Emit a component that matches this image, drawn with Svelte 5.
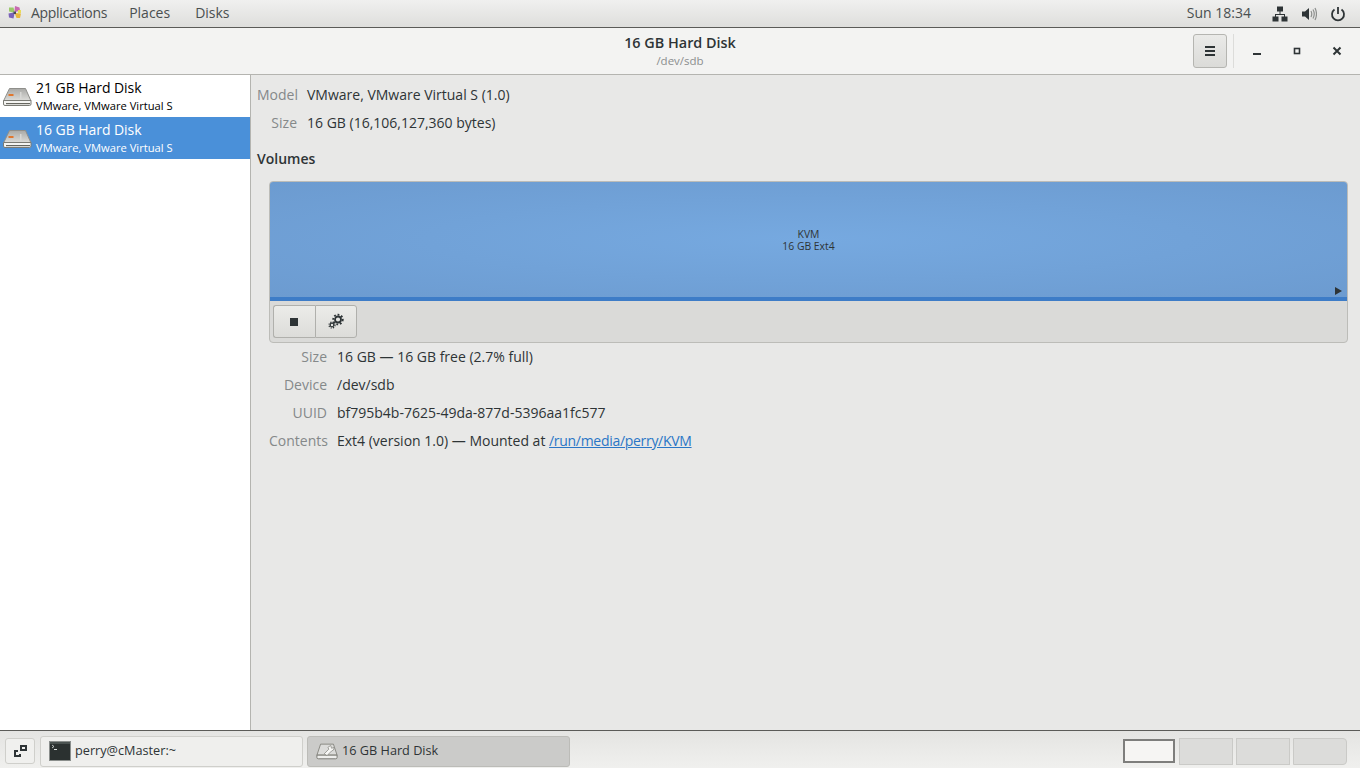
<script>
	const drives = [
		{ name: '21 GB Hard Disk', model: 'VMware, VMware Virtual S', selected: false },
		{ name: '16 GB Hard Disk', model: 'VMware, VMware Virtual S', selected: true }
	];

	const details = [
		{ label: 'Size', value: '16 GB — 16 GB free (2.7% full)' },
		{ label: 'Device', value: '/dev/sdb' },
		{ label: 'UUID', value: 'bf795b4b-7625-49da-877d-5396aa1fc577' },
		{ label: 'Contents', value: 'Ext4 (version 1.0) — Mounted at ', link: '/run/media/perry/KVM' }
	];

	const workspaces = [true, false, false, false];
</script>

{#snippet diskIcon()}
	<svg class="disk" width="32" height="24" viewBox="0 0 32 24">
		<defs>
			<linearGradient id="face" x1="0" y1="0" x2="0" y2="1">
				<stop offset="0" stop-color="#a9a9a6" />
				<stop offset="1" stop-color="#dededb" />
			</linearGradient>
		</defs>
		<path d="M8.500 4.500h16l5.500 12.500H2.500z" fill="url(#face)" stroke="#8f8f8b" />
		<path d="M2.500 16.500h27.500v3.500a1.500 1.500 0 0 1-1.500 1.500h-24.500a1.500 1.500 0 0 1-1.500-1.500z" fill="#f4f4f2" stroke="#7b7b75" />
		<rect x="5" y="19" width="24" height="1.200" fill="#66665f" />
		<rect x="7.500" y="10" width="5" height="2" fill="#e0772e" />
		<rect x="19" y="8" width="1.500" height="7" fill="#d8d8d5" />
	</svg>
{/snippet}

<div class="desktop">
	<header class="top-bar">
		<nav class="top-bar__menus">
			<svg class="foot" width="16" height="16" viewBox="0 0 16 16">
				<path d="M2 2.500h4.500l1 4-1 1-4.500-1z" fill="#9bc96a" />
				<path d="M8 1l4.500 1.500.5 3-4.500 1.500-1-1z" fill="#c86ab0" />
				<path d="M8.500 8l5.500.5-1 4.500h-3.500l-1.500-4z" fill="#e8b83c" />
				<path d="M1.500 8.500l5-1 1 1-1 5-4.500-1z" fill="#7a62b8" />
				<path d="M11 5h3v3h-3z" fill="#e9dc58" />
				<rect x="6.500" y="6.500" width="2.500" height="2.500" fill="#4a4a55" />
			</svg>
			<span class="menu menu--apps">Applications</span>
			<span class="menu menu--places">Places</span>
			<span class="menu">Disks</span>
		</nav>
		<div class="top-bar__status">
			<span class="clock">Sun 18:34</span>
			<svg width="16" height="16" viewBox="0 0 16 16" fill="#2e3436">
				<rect x="5" y="0.500" width="6" height="5" />
				<rect x="0.500" y="10.500" width="6" height="5" />
				<rect x="9.500" y="10.500" width="6" height="5" />
				<path d="M7.500 5h1v3h4.500v3h-1V9H4v2H3V8h4.500z" />
			</svg>
			<svg width="16" height="16" viewBox="0 0 16 16">
				<path d="M1 5.500h3L8 2v12L4 10.500H1z" fill="#2e3436" />
				<path d="M10 5q1.500 3 0 6M12 3.500q2.500 4.500 0 9M14 2q3 6 0 12" fill="none" stroke="#8d8f8d" stroke-width="1.200" />
			</svg>
			<svg width="16" height="16" viewBox="0 0 16 16" fill="none" stroke="#2e3436" stroke-width="1.800">
				<path d="M8 1v7" />
				<path d="M4.500 3.500a6 6 0 1 0 7 0" />
			</svg>
		</div>
	</header>

	<header class="title-bar">
		<div class="title-bar__title">
			<strong>16 GB Hard Disk</strong>
			<span>/dev/sdb</span>
		</div>
		<div class="title-bar__controls">
			<button class="menu-button" aria-label="Menu">
				<svg width="12" height="12" viewBox="0 0 12 12" fill="#2e3436">
					<rect x="1" y="1" width="10" height="2" />
					<rect x="1" y="5" width="10" height="2" />
					<rect x="1" y="9" width="10" height="2" />
				</svg>
			</button>
			<i class="divider"></i>
			<span class="win-btn">
				<svg width="10" height="10" viewBox="0 0 10 10"><rect x="1" y="7" width="8" height="2" fill="#2e3436" /></svg>
			</span>
			<span class="win-btn win-btn--max">
				<svg width="10" height="10" viewBox="0 0 10 10"><rect x="2.500" y="2.500" width="5" height="5" fill="none" stroke="#2e3436" stroke-width="1.600" /></svg>
			</span>
			<span class="win-btn">
				<svg width="10" height="10" viewBox="0 0 10 10"><path d="M1.500 1.500l7 7M8.500 1.500l-7 7" stroke="#2e3436" stroke-width="2" /></svg>
			</span>
		</div>
	</header>

	<div class="window">
		<aside class="sidebar">
			{#each drives as drive}
				<div class="drive" class:drive--selected={drive.selected}>
					{@render diskIcon()}
					<div class="drive__text">
						<span class="drive__name">{drive.name}</span>
						<span class="drive__model">{drive.model}</span>
					</div>
				</div>
			{/each}
		</aside>

		<main class="content">
			<div class="summary">
				<span class="label">Model</span><span>VMware, VMware Virtual S (1.0)</span>
				<span class="label">Size</span><span>16 GB (16,106,127,360 bytes)</span>
			</div>

			<h2>Volumes</h2>

			<section class="volumes">
				<div class="volume-map">
					<div class="volume-map__label">
						<span>KVM</span>
						<span>16 GB Ext4</span>
					</div>
					<i class="mounted"></i>
				</div>
				<div class="volume-tools">
					<button class="tool tool--first" aria-label="Unmount">
						<svg width="10" height="10" viewBox="0 0 10 10"><rect x="1" y="1" width="8" height="8" fill="#2e3436" /></svg>
					</button>
					<button class="tool tool--last" aria-label="Settings">
						<svg width="18" height="18" viewBox="0 0 18 18" fill="none" stroke="#2e3436">
							<circle cx="11" cy="6.500" r="3" stroke-width="1.800" />
							<circle cx="11" cy="6.500" r="4.800" stroke-width="1.800" stroke-dasharray="1.800 1.800" />
							<circle cx="5" cy="12" r="1.800" stroke-width="1.200" />
							<circle cx="5" cy="12" r="3" stroke-width="1.200" stroke-dasharray="1.200 1.200" />
						</svg>
					</button>
				</div>
			</section>

			<div class="details">
				{#each details as row}
					<span class="label">{row.label}</span>
					<span>{row.value}{#if row.link}<a href="#top">{row.link}</a>{/if}</span>
				{/each}
			</div>
		</main>
	</div>

	<footer class="bottom-bar">
		<button class="show-desktop" aria-label="Show desktop">
			<svg width="16" height="16" viewBox="0 0 16 16" fill="#2e3436">
				<path d="M8 2h7v6h-7zM10 4v2h3V4z" fill-rule="evenodd" />
				<path d="M2 7h4v2H4v3h3v-1h2v3H2z" />
			</svg>
		</button>
		<div class="task">
			<svg width="22" height="20" viewBox="0 0 22 20">
				<rect x="0.500" y="0.500" width="21" height="19" fill="#2b3130" stroke="#8a8e8c" />
				<rect x="1" y="1" width="20" height="2" fill="#4a5250" />
				<path d="M3 4l2 1.500L3 7" fill="none" stroke="#dfe3e1" stroke-width="0.800" />
				<rect x="5" y="8" width="3" height="1" fill="#dfe3e1" />
			</svg>
			<span>perry@cMaster:~</span>
		</div>
		<div class="task task--active">
			<svg width="22" height="20" viewBox="0 0 24 20">
				<path d="M5 2.500h14l4 12H1z" fill="#dcdcda" stroke="#85857f" />
				<path d="M1 14.500h22v2.500a1.500 1.500 0 0 1-1.500 1.500h-19A1.500 1.500 0 0 1 1 17z" fill="#efefed" stroke="#75756f" />
				<path d="M9 13l5-5-1-2 3-2 1 3 3-1-1 3-2 1-5 5z" fill="#f7f7f5" stroke="#85857f" stroke-width="0.800" />
			</svg>
			<span>16 GB Hard Disk</span>
		</div>
		<div class="workspaces">
			{#each workspaces as active}
				<span class="workspace" class:workspace--active={active}></span>
			{/each}
		</div>
	</footer>
</div>

<style>
	:global(body) {
		margin: 0;
		overflow: hidden;
	}

	.desktop {
		width: 1360px;
		height: 768px;
		display: flex;
		flex-direction: column;
		font-family: 'Open Sans', 'Noto Sans', sans-serif;
		font-size: 14px;
		color: #2e3436;
		background: #e8e8e7;
		overflow: hidden;
	}

	.top-bar {
		height: 27px;
		box-sizing: content-box;
		flex: none;
		display: flex;
		justify-content: space-between;
		align-items: center;
		background: linear-gradient(#f0f0ef, #dededc);
		border-bottom: 1px solid #5b5b58;
		padding: 0 14px 0 7px;
	}

	.top-bar__menus,
	.top-bar__status {
		display: flex;
		align-items: center;
		margin-top: -2px;
	}

	.foot {
		margin-right: 8px;
	}

	.menu--apps {
		margin-right: 22px;
		letter-spacing: -0.3px;
	}

	.menu--places {
		margin-right: 25px;
	}

	.menu {
		color: #4a4f50;
	}

	.top-bar__status {
		gap: 13px;
	}

	.clock {
		margin-right: 8px;
		color: #4a4f50;
	}

	.top-bar__status svg {
		margin-top: 2px;
	}

	.title-bar {
		height: 46px;
		flex: none;
		position: relative;
		display: flex;
		align-items: center;
		justify-content: flex-end;
		background: #f3f3f2;
		border-bottom: 1px solid #b4b4b0;
	}

	.title-bar__title {
		position: absolute;
		left: 0;
		right: 0;
		top: 5px;
		display: flex;
		flex-direction: column;
		align-items: center;
	}

	.title-bar__title strong {
		font-size: 14.4px;
		font-weight: 600;
		line-height: 19px;
	}

	.title-bar__title span {
		font-size: 11.5px;
		line-height: 17px;
		color: #8b8e8f;
	}

	.title-bar__controls {
		display: flex;
		align-items: center;
		padding-right: 10px;
	}

	.menu-button {
		width: 34px;
		height: 34px;
		padding: 0;
		display: flex;
		align-items: center;
		justify-content: center;
		border: 1px solid #b5b5b1;
		border-radius: 3px;
		background: linear-gradient(#eaeae8, #dbdbd8);
	}

	.divider {
		width: 1px;
		height: 34px;
		background: #dcdcda;
		margin: 0 10px 0 6px;
	}

	.win-btn {
		width: 26px;
		margin-left: 14px;
		display: flex;
		justify-content: center;
	}

	.win-btn:first-of-type {
		margin-left: 0;
	}

	.window {
		flex: 1;
		min-height: 0;
		display: flex;
	}

	.sidebar {
		width: 250px;
		flex: none;
		background: #fff;
		border-right: 1px solid #b4b4b0;
	}

	.drive {
		height: 42px;
		display: flex;
		align-items: center;
		color: #000;
	}

	.drive--selected {
		background: #4a90d9;
		color: #fff;
	}

	.disk {
		flex: none;
		margin: 0 3px 0 1px;
	}

	.drive__text {
		display: flex;
		flex-direction: column;
		margin-top: -1px;
	}

	.drive__name {
		line-height: 19px;
		letter-spacing: -0.05px;
	}

	.drive__model {
		font-size: 11.2px;
		line-height: 17px;
	}

	.content {
		flex: 1;
		min-width: 0;
		padding: 5px 12px 0 6px;
	}

	.summary,
	.details {
		display: grid;
		grid-auto-rows: 28px;
		align-items: center;
		column-gap: 10px;
	}

	.summary {
		grid-template-columns: 40px 1fr;
	}

	.details {
		grid-template-columns: 58px 1fr;
		margin: -1px 0 0 12px;
	}

	.label {
		text-align: right;
		color: #85898a;
	}

	h2 {
		margin: 13px 0 13px;
		font-size: 14px;
		line-height: 19px;
		font-weight: 600;
	}

	.volumes {
		margin-left: 12px;
		height: 162px;
		box-sizing: border-box;
		display: flex;
		flex-direction: column;
		border: 1px solid #bcbcb8;
		border-radius: 4px;
		background: #dadad8;
		overflow: hidden;
	}

	.volume-map {
		height: 119px;
		flex: none;
		box-sizing: border-box;
		position: relative;
		display: flex;
		align-items: center;
		justify-content: center;
		background: radial-gradient(ellipse at center, #76a9e0, #6c9bd0);
		border-bottom: 4px solid #3d7cc7;
	}

	.volume-map__label {
		display: flex;
		flex-direction: column;
		align-items: center;
		font-size: 10.4px;
		line-height: 12px;
		margin-top: 0;
	}

	.mounted {
		position: absolute;
		right: 5px;
		bottom: 2px;
		width: 0;
		height: 0;
		border-left: 7px solid #2e3436;
		border-top: 4px solid transparent;
		border-bottom: 4px solid transparent;
	}

	.volume-tools {
		display: flex;
		padding: 4px 3px;
	}

	.tool {
		width: 42px;
		height: 33px;
		padding: 0;
		display: flex;
		align-items: center;
		justify-content: center;
		border: 1px solid #b0b0ac;
		background: linear-gradient(#ecece9, #dcdcd9);
	}

	.tool--first {
		border-radius: 3px 0 0 3px;
		border-right: none;
		padding-right: 2px;
	}

	.tool--last {
		border-radius: 0 3px 3px 0;
	}

	.details a {
		color: #2a76c6;
		text-decoration: underline;
		letter-spacing: -0.3px;
	}

	.bottom-bar {
		height: 38px;
		flex: none;
		box-sizing: border-box;
		display: flex;
		align-items: center;
		padding: 4px 13px 1px 5px;
		background: linear-gradient(#e4e4e2, #f0f0ee);
		border-top: 1px solid #5b5b58;
	}

	.show-desktop {
		width: 30px;
		height: 26px;
		padding: 0;
		display: flex;
		align-items: center;
		justify-content: center;
		background: #f0f0ee;
		border: 1px solid #cfcfcb;
		border-radius: 3px;
		margin-right: 5px;
	}

	.task {
		width: 263px;
		height: 31px;
		box-sizing: border-box;
		display: flex;
		align-items: center;
		gap: 4px;
		padding-left: 8px;
		background: #efefed;
		border: 1px solid #cfcfcb;
		border-radius: 3px;
		margin-right: 4px;
		font-size: 12.7px;
	}

	.task span {
		margin-top: -2px;
	}

	.task--active {
		background: #cbcbc9;
		border-color: #bcbcb8;
	}

	.workspaces {
		margin-left: auto;
		display: flex;
		align-items: center;
		gap: 3px;
	}

	.workspace {
		width: 54px;
		height: 27px;
		box-sizing: border-box;
		background: #dcdcda;
		border: 1px solid #cacac7;
	}

	.workspace--active {
		background: #f6f5f3;
		border: 2px solid #7e7e7c;
		width: 52px;
		height: 24px;
		margin-right: 1px;
	}

	.workspace:last-child {
		border-radius: 0 4px 4px 0;
	}
</style>
